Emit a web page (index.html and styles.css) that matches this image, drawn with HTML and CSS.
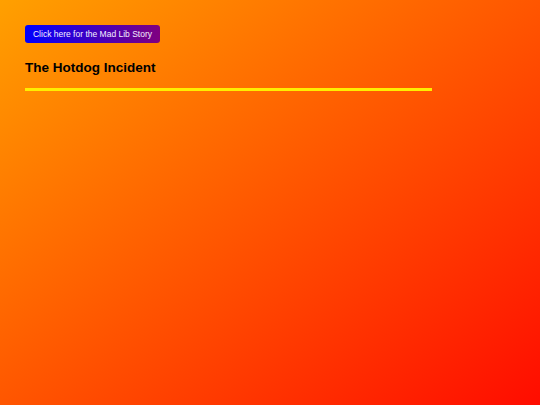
FILE: index.html
```html
<!DOCTYPE html>
<html>
<head>
<meta charset="utf-8">
<link rel="stylesheet" href="styles.css">
</head>
<body>
<div class="page">
  <button class="story-btn">Click here for the Mad Lib Story</button>
  <h1 class="title">The Hotdog Incident</h1>
  <div class="rule"></div>
</div>
</body>
</html>
```
FILE: styles.css
```css
html, body {
  margin: 0;
  height: 100%;
}
body {
  background: linear-gradient(to bottom right, #ffa000, #ff0c00);
  font-family: "Liberation Sans", Arial, sans-serif;
}
.page {
  padding: 25px;
  display: flex;
  flex-direction: column;
  align-items: flex-start;
}
.story-btn {
  height: 18px;
  width: 135px;
  padding: 0;
  border: none;
  border-radius: 3px;
  background: linear-gradient(to right, #0000ff, #800080);
  color: #f4eeff;
  font-family: "Liberation Sans", Arial, sans-serif;
  font-size: 8.5px;
  white-space: nowrap;
  text-align: center;
  line-height: 18px;
}
.title {
  margin: 17px 0 0;
  font-size: 13.5px;
  font-weight: bold;
  color: #000;
  line-height: 16px;
}
.rule {
  margin-top: 12px;
  width: 407px;
  height: 3px;
  background: #ffee00;
}
```
